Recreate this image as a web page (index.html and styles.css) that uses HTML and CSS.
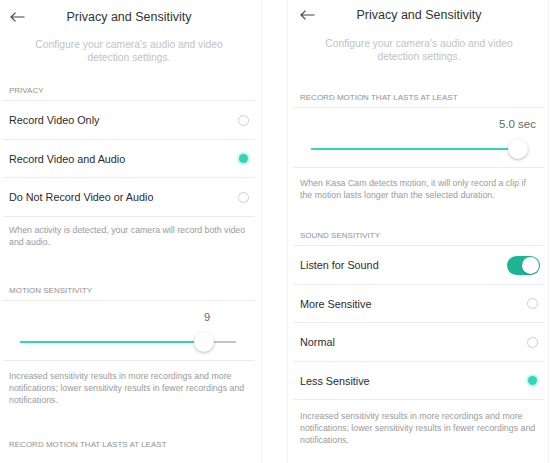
FILE: index.html
```
<!DOCTYPE html>
<html lang="en">
<head>
  <meta charset="UTF-8" />
  <meta name="viewport" content="width=device-width, initial-scale=1.0"/>
  <title>Privacy and Sensitivity</title>
  <link rel="stylesheet" href="styles.css">
</head>
<body>

  <div class="screens">

    <!-- first screen -->
    <section class="phone phone-left">
      <header class="topbar">
        <span class="back">
          <svg width="15" height="10" viewBox="0 0 15 10"><path d="M14.5 5H1 M5.5 0.6 L1 5 L5.5 9.4" fill="none" stroke="#444" stroke-width="1.2"/></svg>
        </span>
        <h1>Privacy and Sensitivity</h1>
        <span></span>
      </header>
      <p class="subtitle">Configure your camera's audio and video<br>detection settings.</p>

      <div class="section-title privacy-title">PRIVACY</div>
      <div class="row"><span>Record Video Only</span><span class="radio"></span></div>
      <div class="row"><span>Record Video and Audio</span><span class="radio checked"></span></div>
      <div class="row"><span>Do Not Record Video or Audio</span><span class="radio"></span></div>
      <p class="note note-first">When activity is detected, your camera will record both video and audio.</p>

      <div class="section-title motion-title">MOTION SENSITIVITY</div>
      <div class="slider-block">
        <div class="value value-thumb">9</div>
        <div class="slider">
          <div class="track"><div class="fill" style="width: 86%"></div></div>
          <div class="thumb" style="left: 89%"></div>
        </div>
      </div>
      <p class="note note-slider">Increased sensitivity results in more recordings and more notifications; lower sensitivity results in fewer recordings and notifications.</p>

      <div class="section-title record-title">RECORD MOTION THAT LASTS AT LEAST</div>
    </section>

    <!-- second screen -->
    <section class="phone phone-right">
      <header class="topbar">
        <span class="back">
          <svg width="15" height="10" viewBox="0 0 15 10"><path d="M14.5 5H1 M5.5 0.6 L1 5 L5.5 9.4" fill="none" stroke="#444" stroke-width="1.2"/></svg>
        </span>
        <h1>Privacy and Sensitivity</h1>
        <span></span>
      </header>
      <p class="subtitle">Configure your camera's audio and video<br>detection settings.</p>

      <div class="section-title record-top">RECORD MOTION THAT LASTS AT LEAST</div>
      <div class="slider-block">
        <div class="value value-end">5.0 sec</div>
        <div class="slider">
          <div class="track"><div class="fill" style="width: 97%"></div></div>
          <div class="thumb" style="left: 101.5%"></div>
        </div>
      </div>
      <p class="note note-slider">When Kasa Cam detects motion, it will only record a clip if the motion lasts longer than the selected duration.</p>

      <div class="section-title sound-title">SOUND SENSITIVITY</div>
      <div class="row"><span>Listen for Sound</span><span class="toggle on"></span></div>
      <div class="row"><span>More Sensitive</span><span class="radio"></span></div>
      <div class="row"><span>Normal</span><span class="radio"></span></div>
      <div class="row"><span>Less Sensitive</span><span class="radio checked"></span></div>
      <p class="note note-last">Increased sensitivity results in more recordings and more notifications; lower sensitivity results in fewer recordings and notifications.</p>
    </section>

  </div>

</body>
</html>
```

FILE: styles.css
```
:root {
  --text: #2b2b2b;
  --muted: #9a9a9a;
  --faint: #c2c2c2;
  --line: #ececec;
  --teal: #35d4b8;
  --green: #1db595;
}

* {
  box-sizing: border-box;
}

body {
  margin: 0;
  width: 554px;
  height: 463px;
  overflow: hidden;
  background: #fff;
  font-family: 'Liberation Sans', Arial, sans-serif;
  color: var(--text);
}

.screens {
  display: flex;
  gap: 25px;
  height: 463px;
}

.phone {
  width: 262px;
  height: 463px;
}

.phone-left {
  padding: 0 6px 0 3px;
  border-right: 1px solid #f3f3f3;
}

.phone-right {
  padding: 0 4px 0 6px;
  border-left: 1px solid #f3f3f3;
  border-right: 1px solid #f3f3f3;
}

.topbar {
  display: grid;
  grid-template-columns: 1fr auto 1fr;
  align-items: center;
  height: 34px;
}

.phone-right .topbar {
  height: 30px;
}

.back {
  display: flex;
  padding-left: 7px;
}

.phone-right .back {
  padding-left: 6px;
}

.topbar h1 {
  margin: 0;
  font-size: 12.5px;
  font-weight: normal;
  color: #333;
}

.subtitle {
  margin: 4px 0 0;
  text-align: center;
  font-size: 10.3px;
  line-height: 13px;
  color: var(--faint);
}

.phone-right .subtitle {
  margin-top: 7px;
}

.section-title {
  padding: 0 6px 4px;
  font-size: 8px;
  line-height: 10px;
  color: #929292;
  border-bottom: 1px solid var(--line);
}

.privacy-title { margin-top: 22px; }
.motion-title { margin-top: 37.5px; }
.record-title { margin-top: 34px; border-bottom: none; }
.record-top { margin-top: 30px; }
.sound-title { margin-top: 30px; }

.row {
  display: flex;
  align-items: center;
  justify-content: space-between;
  height: 38.5px;
  padding: 1px 6px 0;
  font-size: 10.8px;
  border-bottom: 1px solid var(--line);
}

.radio {
  width: 11px;
  height: 11px;
  border-radius: 50%;
  border: 1px solid #cfcfcf;
}

.radio.checked {
  width: 9px;
  height: 9px;
  margin-right: 1px;
  border: none;
  background: var(--teal);
  box-shadow: 0 0 0 2px rgba(47, 211, 180, 0.25);
}

.toggle {
  position: relative;
  width: 33px;
  height: 19px;
  margin-right: -2px;
  border-radius: 10px;
  background: #e2e2e2;
}

.toggle.on {
  background: var(--green);
}

.toggle:after {
  content: '';
  position: absolute;
  top: 1px;
  left: 1px;
  width: 17px;
  height: 17px;
  border-radius: 50%;
  background: #fff;
  box-shadow: 0 1px 2px rgba(0, 0, 0, 0.2);
}

.toggle.on:after {
  left: 15px;
}

.note {
  margin: 0;
  padding: 7px 6px 0;
  font-size: 8.8px;
  line-height: 12.5px;
  color: var(--muted);
}

.note-slider {
  padding-top: 9px;
  line-height: 12px;
}

.note-last {
  padding-top: 10px;
  line-height: 12px;
}

.slider-block {
  padding: 10px 19px 7px 17px;
  border-bottom: 1px solid var(--line);
}

.value {
  font-size: 11.5px;
  line-height: 12px;
  color: #666;
  text-align: right;
}

.value-thumb {
  padding-right: 26px;
  font-size: 11px;
}

.value-end {
  margin-right: -11px;
}

.slider {
  position: relative;
  height: 22px;
  margin: 8px 10px 0;
  display: flex;
  align-items: center;
}

.track {
  flex: none;
  width: calc(100% + 20px);
  height: 2px;
  margin: 0 -10px;
  background: #c4c4c4;
}

.fill {
  height: 2px;
  background: var(--teal);
}

.thumb {
  position: absolute;
  top: 1px;
  width: 20px;
  height: 20px;
  margin-left: -10px;
  border-radius: 50%;
  background: #fff;
  box-shadow: 0 1px 3px rgba(0, 0, 0, 0.28);
}
```
